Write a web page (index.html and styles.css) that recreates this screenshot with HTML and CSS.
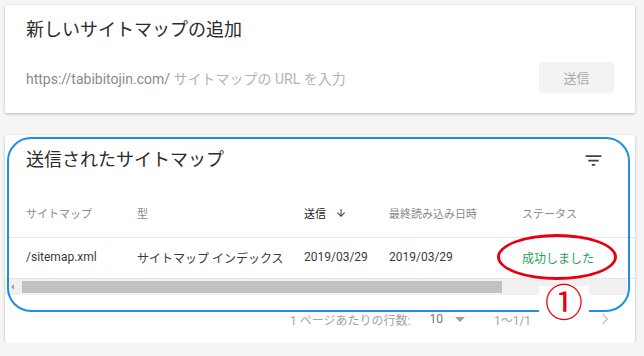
FILE: index.html
```html
<!DOCTYPE html>
<html lang="ja">
<head>
    <meta charset="UTF-8">
    <title>サイトマップ</title>
    <link rel="stylesheet" href="styles.css">
</head>
<body>
    <!-- Add sitemap -->
    <section class="card add-card">
        <h2 class="card-title">新しいサイトマップの追加</h2>
        <div class="add-row">
            <div class="url-field">
                <span class="url-prefix">https://tabibitojin.com/</span>
                <span class="url-placeholder">サイトマップの URL を入力</span>
            </div>
            <button class="send-btn">送信</button>
        </div>
    </section>

    <!-- Submitted sitemaps -->
    <section class="card list-card">
        <div class="list-head">
            <h2 class="card-title">送信されたサイトマップ</h2>
            <svg class="filter-icon" width="21" height="21" viewBox="0 0 24 24">
                <path d="M10 18h4v-2h-4v2zM3 6v2h18V6H3zm3 7h12v-2H6v2z" fill="#424242"/>
            </svg>
        </div>

        <div class="cols head-row">
            <span>サイトマップ</span>
            <span>型</span>
            <span class="sorted">送信
                <svg width="12" height="12" viewBox="0 0 24 24"><path d="M20 12l-1.41-1.41L13 16.17V4h-2v12.17l-5.58-5.59L4 12l8 8 8-8z" fill="#424242"/></svg>
            </span>
            <span>最終読み込み日時</span>
            <span>ステータス</span>
        </div>
        <div class="cols data-row">
            <span>/sitemap.xml</span>
            <span>サイトマップ インデックス</span>
            <span>2019/03/29</span>
            <span>2019/03/29</span>
            <span class="ok">成功しました</span>
        </div>

        <div class="scroll-track">
            <span class="scroll-arrow"></span>
            <span class="scroll-thumb"></span>
        </div>

        <div class="pager">
            <span class="rows-label">1 ページあたりの行数:</span>
            <span class="rows-value">10</span>
            <span class="rows-caret"></span>
            <span class="range">1〜1/1</span>
            <svg class="next" width="8" height="12" viewBox="0 0 8 12">
                <path d="M1.5 1l5 5-5 5" fill="none" stroke="#c4c4c4" stroke-width="1.4"/>
            </svg>
        </div>

        <!-- annotation marks -->
        <div class="mark-box"></div>
        <div class="mark-ellipse"></div>
        <div class="mark-num">①</div>
    </section>
</body>
</html>
```

FILE: styles.css
```css
body {
    margin: 0;
    padding: 5px 9px 0 5px;
    background-color: #f5f5f5;
    font-family: Roboto, "Noto Sans CJK JP", sans-serif;
    color: #212121;
}

.card {
    background-color: white;
    box-shadow: 0 1px 3px rgba(0, 0, 0, 0.25);
    border-radius: 2px;
}

.card-title {
    margin: 0;
    font-size: 18px;
    font-weight: 400;
    line-height: 24px;
    color: #2b2b2b;
}

/* add sitemap card */
.add-card {
    height: 108px;
    box-sizing: border-box;
    padding: 13px 21px 0 21px;
    margin-bottom: 22px;
}

.add-row {
    display: flex;
    align-items: center;
    justify-content: space-between;
    margin-top: 20px;
}

.url-field {
    font-size: 14px;
}

.url-prefix {
    color: #8a8a8a;
}

.url-placeholder {
    color: #b3b3b3;
}

.send-btn {
    width: 75px;
    height: 31px;
    border: none;
    border-radius: 3px;
    background-color: #f3f3f3;
    color: #a8a8a8;
    font-family: inherit;
    font-size: 13px;
}

/* list card */
.list-card {
    position: relative;
    height: 208px;
    box-sizing: border-box;
    padding-top: 13px;
}

.list-head {
    display: flex;
    align-items: center;
    justify-content: space-between;
    padding: 0 31px 0 21px;
}

.cols {
    display: grid;
    grid-template-columns: 111px 167px 85px 133px 1fr;
    align-items: center;
    padding-left: 21px;
    border-bottom: 1px solid #e6e6e6;
}

.head-row {
    margin-top: 21px;
    height: 40px;
    padding-bottom: 4px;
    font-size: 11px;
    color: #8a8a8a;
}

.sorted {
    display: flex;
    align-items: center;
    gap: 9px;
    color: #212121;
}

.data-row {
    height: 38px;
    padding-bottom: 2px;
    font-size: 12px;
    color: #3a3a3a;
}

.ok {
    color: #23a35c;
}

.scroll-track {
    display: flex;
    align-items: center;
    height: 16px;
    width: 622px;
    background-color: #f1f1f1;
}

.scroll-arrow {
    width: 0;
    height: 0;
    margin: 0 8px 0 6px;
    border-top: 3px solid transparent;
    border-bottom: 3px solid transparent;
    border-right: 3px solid #a3a3a3;
}

.scroll-thumb {
    width: 480px;
    height: 12px;
    background-color: #c1c1c1;
}

.pager {
    display: flex;
    align-items: center;
    height: 48px;
    padding-left: 285px;
    font-size: 12px;
    color: #a3a3a3;
}

.rows-value {
    margin-left: 19px;
    color: #757575;
}

.rows-caret {
    width: 0;
    height: 0;
    margin-left: 12px;
    border-left: 5px solid transparent;
    border-right: 5px solid transparent;
    border-top: 5px solid #9e9e9e;
}

.range {
    margin-left: 29px;
}

.next {
    margin-left: 70px;
}

/* annotations over the card */
.mark-box {
    position: absolute;
    left: 2px;
    top: 2px;
    width: 623px;
    height: 175px;
    box-sizing: border-box;
    border: 2px solid #1a8fe3;
    border-radius: 24px;
}

.mark-ellipse {
    position: absolute;
    left: 492px;
    top: 99px;
    width: 120px;
    height: 46px;
    box-sizing: border-box;
    border: 3px solid #e60012;
    border-radius: 50%;
}

.mark-num {
    position: absolute;
    left: 534px;
    top: 151px;
    width: 50px;
    height: 34px;
    background-color: white;
    color: #e60012;
    font-size: 38px;
    font-weight: 400;
    line-height: 34px;
    text-align: center;
}
```
